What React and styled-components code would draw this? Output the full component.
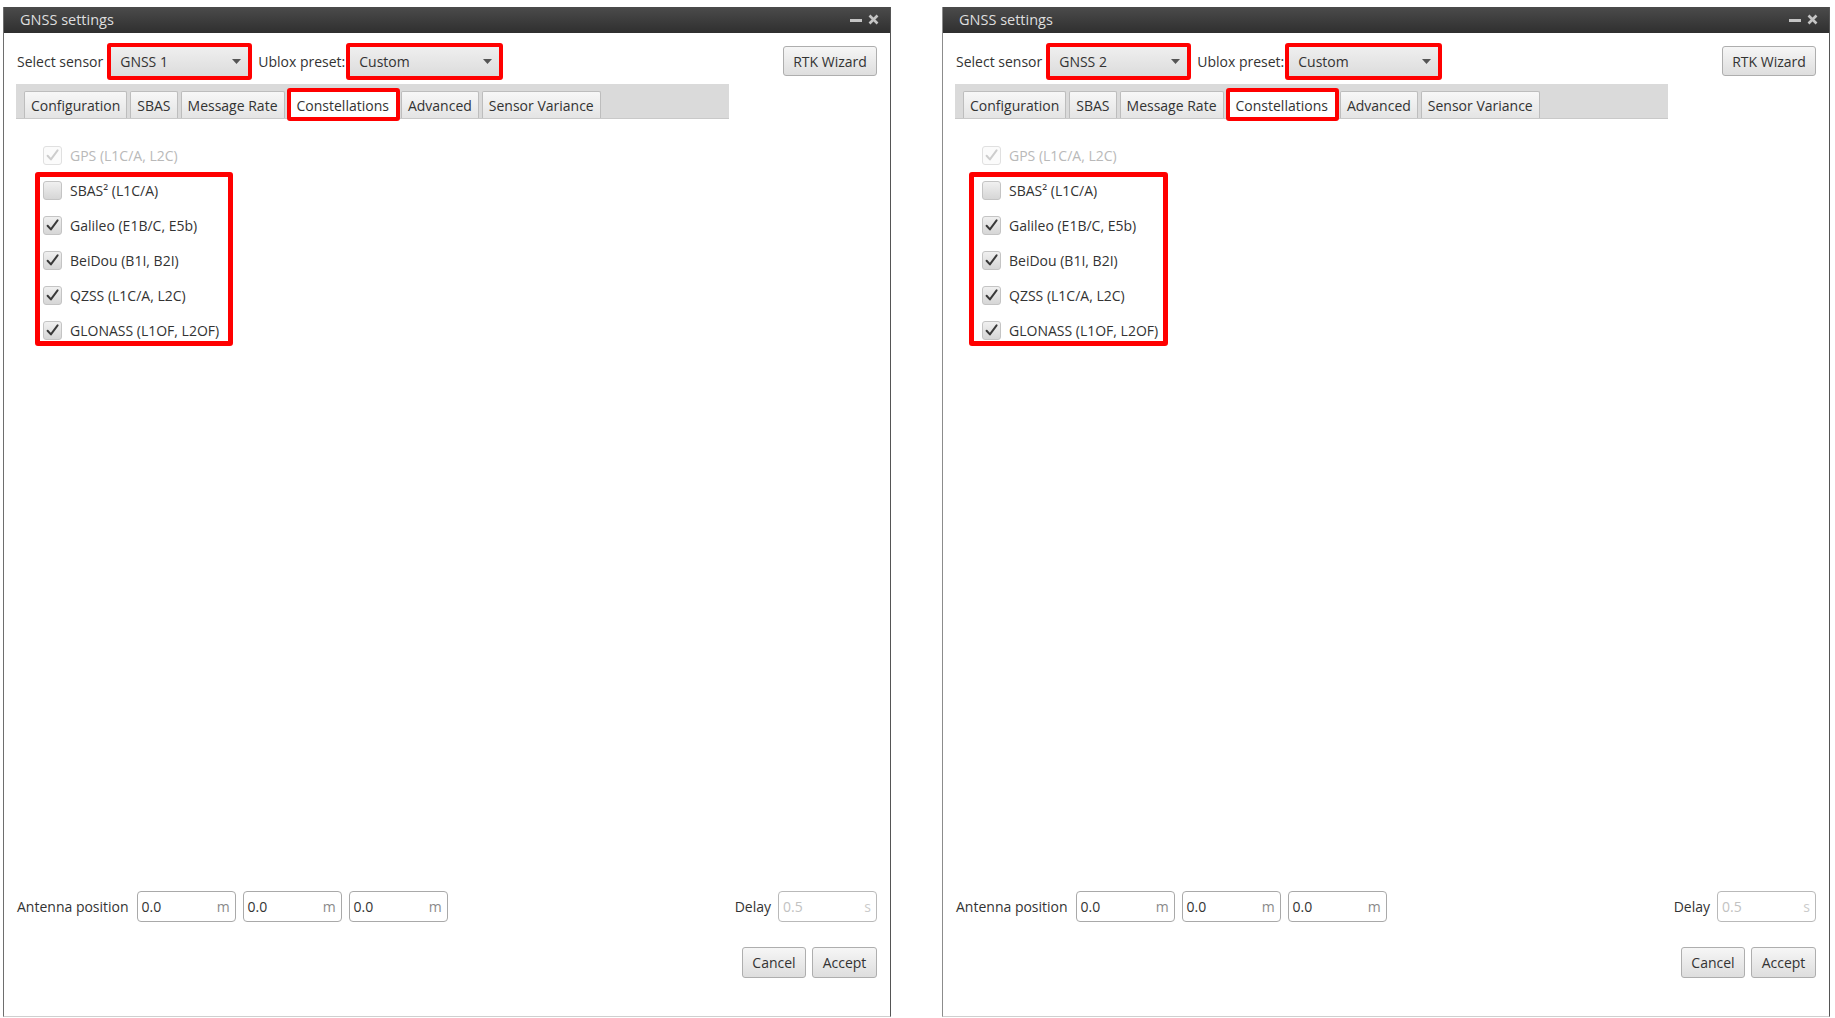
import styled, { createGlobalStyle } from "styled-components";

const GlobalStyle = createGlobalStyle`
    html, body {
        margin: 0;
        padding: 0;
        background: #ffffff;
    }

    body {
        font-family: "Open Sans", "Liberation Sans", sans-serif;
        font-size: 14px;
        color: #333333;
    }
`;

const Page = styled.div`
    display: flex;
    gap: 51px;
    padding: 7px 0 0 3px;
`;

const Window = styled.div`
    display: flex;
    flex-direction: column;
    width: 888px;
    height: 1010px;
    box-sizing: border-box;
    border-left: 1px solid ${(props) => props.$edge};
    border-right: 1px solid #555555;
    border-bottom: 1px solid #cfcfcf;
    background: #ffffff;
`;

const TitleBar = styled.div`
    display: flex;
    align-items: center;
    justify-content: space-between;
    height: 26px;
    padding: 0 11px 1px 16px;
    box-sizing: border-box;
    background: linear-gradient(#4b4b4b, #2f2f2f);
    color: #dedede;
    font-size: 14.5px;
`;

const WindowControls = styled.div`
    display: flex;
    align-items: center;
    gap: 5px;
    color: #c4c4c4;
`;

const Body = styled.div`
    flex: 1;
    display: flex;
    flex-direction: column;
    padding: 13px 13px 38px 12px;
`;

const Toolbar = styled.div`
    display: flex;
    align-items: center;
    height: 30px;
`;

const Label = styled.span`
    margin-left: ${(props) => props.$indent || 0}px;
    margin-right: ${(props) => props.$gap || 0}px;
    white-space: nowrap;
`;

/* red outline laid over a control */
const Highlight = styled.div`
    position: relative;
    display: ${(props) => (props.$block ? "block" : "inline-flex")};
    margin-right: ${(props) => props.$after || 0}px;

    &::after {
        content: "";
        position: absolute;
        top: ${(props) => props.$t}px;
        left: ${(props) => props.$l}px;
        right: ${(props) => props.$r}px;
        bottom: ${(props) => props.$b}px;
        border: ${(props) => props.$w || 4}px solid #ff0000;
        border-radius: 3px;
        pointer-events: none;
    }
`;

const Combo = styled.div`
    display: flex;
    align-items: center;
    justify-content: space-between;
    box-sizing: border-box;
    width: ${(props) => props.$width}px;
    height: 29px;
    padding: 0 7px 0 9px;
    background: linear-gradient(#efefef, #dcdcdc);
    color: #333333;
`;

const Button = styled.div`
    display: flex;
    align-items: center;
    justify-content: center;
    box-sizing: border-box;
    width: ${(props) => props.$width}px;
    height: ${(props) => props.$height || 31}px;
    border: 1px solid #aeaeae;
    border-radius: 3px;
    background: linear-gradient(#f6f6f6, #dedede);
    color: #333333;
    margin-left: ${(props) => (props.$push ? "auto" : "0")};
`;

const TabBar = styled.div`
    display: flex;
    align-items: flex-end;
    gap: 3px;
    width: 713px;
    height: 35px;
    box-sizing: border-box;
    margin-top: 8px;
    padding: 0 8px;
    background: #dadada;
    border-bottom: 1px solid #c9c9c9;
`;

const Tab = styled.div`
    display: flex;
    align-items: center;
    box-sizing: border-box;
    height: 27px;
    padding: 0 ${(props) => (props.$active ? 8 : 6)}px;
    border: 1px solid #bdbdbd;
    border-bottom: none;
    border-radius: 2px 2px 0 0;
    background: ${(props) =>
        props.$active ? "#ffffff" : "linear-gradient(#f7f7f7, #e4e4e4)"};
    color: #333333;
    white-space: nowrap;
`;

const Constellations = styled.div`
    display: flex;
    flex-direction: column;
    align-items: flex-start;
    margin-top: 19px;
    padding-left: 27px;
`;

const CheckRow = styled.div`
    display: flex;
    align-items: center;
    gap: 8px;
    height: 35px;
    color: ${(props) => (props.$disabled ? "#b9b9b9" : "#333333")};
    white-space: nowrap;
`;

const Box = styled.div`
    display: flex;
    align-items: center;
    justify-content: center;
    box-sizing: border-box;
    width: 19px;
    height: 19px;
    border: 1px solid ${(props) => (props.$disabled ? "#e0e0e0" : "#c4c4c4")};
    border-radius: 3px;
    background: ${(props) =>
        props.$disabled ? "#fbfbfb" : "linear-gradient(#f0f0f0, #d6d6d6)"};
    color: ${(props) => (props.$disabled ? "#cdcdcd" : "#3a3a3a")};
`;

const Spacer = styled.div`
    flex: 1;
`;

const FieldRow = styled.div`
    display: flex;
    align-items: center;
    height: 31px;
`;

const Fields = styled.div`
    display: flex;
    gap: 7px;
`;

const Field = styled.div`
    display: flex;
    align-items: center;
    justify-content: space-between;
    box-sizing: border-box;
    width: 99px;
    height: 31px;
    padding: 0 5px 0 4px;
    border: 1px solid ${(props) => (props.$disabled ? "#b9b9b9" : "#a9a9a9")};
    border-radius: 4px;
    background: #ffffff;
    color: ${(props) => (props.$disabled ? "#c2c2c2" : "#333333")};
`;

const Unit = styled.span`
    color: ${(props) => (props.$disabled ? "#cbcbcb" : "#8a8a8a")};
`;

const DelayGroup = styled.div`
    display: flex;
    align-items: center;
    gap: 7px;
    margin-left: auto;
`;

const Actions = styled.div`
    display: flex;
    justify-content: flex-end;
    gap: 6px;
    margin-top: 25px;
`;

const Arrow = () => (
    <svg width="9" height="5" viewBox="0 0 9 5">
        <path d="M0 0H9L4.5 5Z" fill="#555555" />
    </svg>
);

const Check = () => (
    <svg width="17" height="17" viewBox="0 0 17 17">
        <path
            d="M3.6 8.8L6.9 12.4L13.6 3.4"
            fill="none"
            stroke="currentColor"
            strokeWidth="2"
            strokeLinecap="round"
            strokeLinejoin="round"
        />
    </svg>
);

const Minimize = () => (
    <svg width="13" height="12" viewBox="0 0 13 12">
        <rect x="0" y="5" width="12" height="3" fill="currentColor" />
    </svg>
);

const Close = () => (
    <svg width="11" height="11" viewBox="0 0 11 11">
        <path
            d="M1.5 1.5L9.5 9.5M9.5 1.5L1.5 9.5"
            stroke="currentColor"
            strokeWidth="2.6"
        />
    </svg>
);

const tabs = [
    "Configuration",
    "SBAS",
    "Message Rate",
    "Constellations",
    "Advanced",
    "Sensor Variance",
];

const systems = [
    { name: "SBAS² (L1C/A)", checked: false },
    { name: "Galileo (E1B/C, E5b)", checked: true },
    { name: "BeiDou (B1I, B2I)", checked: true },
    { name: "QZSS (L1C/A, L2C)", checked: true },
    { name: "GLONASS (L1OF, L2OF)", checked: true },
];

const CheckItem = ({ label, checked, disabled }) => (
    <CheckRow $disabled={disabled}>
        <Box $disabled={disabled}>{checked && <Check />}</Box>
        {label}
    </CheckRow>
);

const GnssWindow = ({ sensor, edge, listLeft, listWidth }) => (
    <Window $edge={edge}>
        <TitleBar>
            <span>GNSS settings</span>
            <WindowControls>
                <Minimize />
                <Close />
            </WindowControls>
        </TitleBar>

        <Body>
            <Toolbar>
                <Label $indent={1} $gap={8}>
                    Select sensor
                </Label>
                <Highlight $t={-4} $l={-4} $r={-4} $b={-4} $after={10}>
                    <Combo $width={137}>
                        {sensor}
                        <Arrow />
                    </Combo>
                </Highlight>
                <Label $gap={5}>Ublox preset:</Label>
                <Highlight $t={-4} $l={-4} $r={-4} $b={-4}>
                    <Combo $width={149}>
                        Custom
                        <Arrow />
                    </Combo>
                </Highlight>
                <Button $width={94} $height={30} $push>
                    RTK Wizard
                </Button>
            </Toolbar>

            <TabBar>
                {tabs.map((tab) =>
                    tab === "Constellations" ? (
                        <Highlight key={tab} $t={-3} $l={-1} $r={-2} $b={-3}>
                            <Tab $active>{tab}</Tab>
                        </Highlight>
                    ) : (
                        <Tab key={tab}>{tab}</Tab>
                    )
                )}
            </TabBar>

            <Constellations>
                <CheckItem label="GPS (L1C/A, L2C)" checked disabled />
                <Highlight
                    $block
                    $w={5}
                    $t={-1}
                    $l={listLeft}
                    $r={0}
                    $b={2}
                    style={{ width: listWidth + listLeft }}
                >
                    {systems.map((item) => (
                        <CheckItem
                            key={item.name}
                            label={item.name}
                            checked={item.checked}
                        />
                    ))}
                </Highlight>
            </Constellations>

            <Spacer />

            <FieldRow>
                <Label $indent={1} $gap={8}>
                    Antenna position
                </Label>
                <Fields>
                    {["x", "y", "z"].map((axis) => (
                        <Field key={axis}>
                            0.0
                            <Unit>m</Unit>
                        </Field>
                    ))}
                </Fields>
                <DelayGroup>
                    Delay
                    <Field $disabled>
                        0.5
                        <Unit $disabled>s</Unit>
                    </Field>
                </DelayGroup>
            </FieldRow>

            <Actions>
                <Button $width={64}>Cancel</Button>
                <Button $width={65}>Accept</Button>
            </Actions>
        </Body>
    </Window>
);

const App = () => (
    <>
        <GlobalStyle />
        <Page>
            <GnssWindow sensor="GNSS 1" edge="#6e6e6e" listLeft={-8} listWidth={198} />
            <GnssWindow sensor="GNSS 2" edge="#8c8c8c" listLeft={-13} listWidth={199} />
        </Page>
    </>
);

export default App;
